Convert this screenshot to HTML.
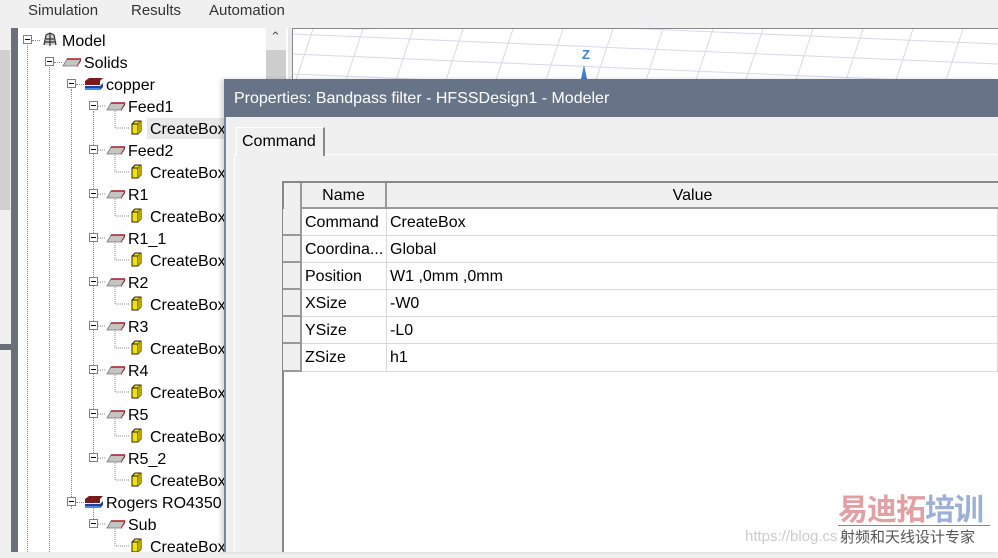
<!DOCTYPE html>
<html><head><meta charset="utf-8"><style>
*{margin:0;padding:0;box-sizing:border-box}
body{width:998px;height:552px;overflow:hidden;background:#f0f0f0;font-family:"Segoe UI","Liberation Sans","Noto Sans CJK SC",sans-serif;position:relative;font-size:16px;color:#000}
.a{position:absolute}
.menu span{position:absolute;top:2px;font-size:15px;color:#333}
.t{position:absolute;font-size:16px;white-space:nowrap;line-height:20px;margin-top:2px}
.bx{position:absolute;width:9px;height:9px;border:1px solid #808080;background:#fff}
.bx:after{content:"";position:absolute;left:1px;top:3px;width:5px;height:1px;background:#000}
.vl{position:absolute;border-left:1px dotted #888;width:0}
.hl{position:absolute;border-top:1px dotted #888;height:0}
.cell{position:absolute;border-right:1px solid #d8d8d8;border-bottom:1px solid #d8d8d8;font-size:16px;line-height:28px;padding-left:3px;white-space:nowrap;overflow:hidden;background:#fff}
.rh{position:absolute;left:283px;width:19px;background:#f0f0f0;border-right:2px solid #999;border-bottom:2px solid #999}
</style></head><body>
<div class="menu a" style="left:0;top:0;width:998px;height:28px;background:#f0f0f0">
<span style="left:28px">Simulation</span><span style="left:131px">Results</span><span style="left:209px">Automation</span></div>
<div class="a" style="left:0;top:28px;width:11px;height:524px;background:#f0f0f0"></div>
<div class="a" style="left:0;top:50px;width:10px;height:160px;background:#cfd0cf"></div>
<div class="a" style="left:0;top:344px;width:11px;height:6px;background:#6a6f7a"></div>
<div class="a" style="left:11px;top:28px;width:7px;height:524px;background:#6a6f7a"></div>
<div class="a" style="left:18px;top:28px;width:274px;height:524px;background:#fff"></div>
<div class="a" style="left:266px;top:28px;width:20px;height:524px;background:#f0f0f0"></div>
<div class="a" style="left:266px;top:50px;width:20px;height:190px;background:#cdcdcd"></div>
<div class="a" style="left:270px;top:29px;font-size:13px;color:#555">&#8963;</div>
<div class="a" style="left:288px;top:28px;width:4px;height:524px;background:#e8e8e8"></div>
<div class="a" style="left:292px;top:28px;width:706px;height:524px;background:#fff;border-left:1px solid #888;border-top:1px solid #888"></div>
<svg class="a" style="left:293px;top:29px" width="705" height="52"><g stroke="#d8d8e8" stroke-width="1" fill="none">
<path d="M0 5 L705 35 M0 25 L705 55 M0 45 L705 75 M0 -15 L705 15 M60 0 L705 -10"/>
<path d="M20 0 L0 60 M70 0 L50 60 M120 0 L100 60 M170 0 L150 60 M220 0 L200 60 M270 0 L250 60 M320 0 L300 60 M370 0 L350 60 M420 0 L400 60 M470 0 L450 60 M520 0 L500 60 M570 0 L550 60 M620 0 L600 60 M670 0 L650 60"/></g>
<text x="289" y="30" font-family="Liberation Sans" font-weight="bold" font-size="13" fill="#3b7fd8">Z</text>
<path d="M288 50 L291 36 L294 50 Z" fill="#3b7fd8"/></svg>

<div class="vl" style="left:27px;top:45px;height:507px"></div>
<div class="vl" style="left:49px;top:67px;height:485px"></div>
<div class="vl" style="left:71px;top:89px;height:420px"></div>
<div class="vl" style="left:93px;top:111px;height:350px"></div>
<div class="vl" style="left:93px;top:507px;height:20px"></div>

<div class="bx" style="left:23px;top:35px"></div><div class="hl" style="left:32px;top:40px;width:8px"></div>
<svg class="a" style="left:41px;top:31px" width="18" height="17"><path d="M3 14 L5 4 L9 2 L13 4 L15 14 M5 8 L13 8 M9 2 L9 15 M4 11 L14 11" stroke="#333" fill="#ccc" stroke-width="1.2"/></svg>
<div class="t" style="left:62px;top:30px">Model</div>
<div class="bx" style="left:45px;top:57px"></div><div class="hl" style="left:54px;top:62px;width:8px"></div>
<div class="t" style="left:84px;top:52px">Solids</div>
<div class="bx" style="left:67px;top:79px"></div><div class="hl" style="left:76px;top:84px;width:8px"></div>
<div class="t" style="left:106px;top:74px">copper</div>
<div class="bx" style="left:67px;top:497px"></div><div class="hl" style="left:76px;top:502px;width:8px"></div>
<div class="t" style="left:106px;top:492px">Rogers RO4350</div>

<svg class="a" style="left:0;top:0" width="224" height="552">
<defs>
<g id="slab"><path d="M2 10 L6 3 L20 3 L16 10 Z" fill="#c4c4c4" stroke="#777" stroke-width=".8"/><path d="M16 10 L20 3 L20 5 L16 11Z" fill="#8b1a1a"/><path d="M6 3 L20 3" stroke="#a02020" stroke-width="1.5"/></g>
<g id="cube"><path d="M1 4 L4 1 L10 1 L10 11 L7 14 L1 14 Z" fill="#f2e400" stroke="#222" stroke-width="1"/><path d="M1 4 L7 4 L10 1 M7 4 L7 14" stroke="#222" fill="none"/><path d="M7 4 L10 1 L10 11 L7 14Z" fill="#b8a800"/></g>
<g id="mat"><path d="M2 3 L6 0 L20 0 L17 3Z M2 3 L17 3 L17 7 L2 7Z" fill="#7a1a1a"/><path d="M2 8 L17 8 L20 5 L20 9 L17 12 L2 12Z" fill="#2040a0"/><path d="M2 10 L17 10 L17 12 L2 12Z" fill="#4a8ae0"/></g>
</defs>
<use href="#slab" x="61" y="56"/>
<use href="#mat" x="83" y="78"/>
<use href="#mat" x="83" y="496"/>
</svg>

<svg class="a" style="left:0;top:0" width="224" height="552">
<g stroke="#888" stroke-dasharray="1,1" fill="none">
<path d="M115 111 V128 H130 M115 155 V172 H130 M115 199 V216 H130 M115 243 V260 H130 M115 287 V304 H130 M115 331 V348 H130 M115 375 V392 H130 M115 419 V436 H130 M115 463 V480 H130 M115 529 V546 H130"/>
<path d="M98 106 H106 M98 150 H106 M98 194 H106 M98 238 H106 M98 282 H106 M98 326 H106 M98 370 H106 M98 414 H106 M98 458 H106 M98 524 H106"/>
</g>
<g fill="#fff" stroke="#808080">
<rect x="89.5" y="101.5" width="8" height="8"/><rect x="89.5" y="145.5" width="8" height="8"/><rect x="89.5" y="189.5" width="8" height="8"/><rect x="89.5" y="233.5" width="8" height="8"/><rect x="89.5" y="277.5" width="8" height="8"/><rect x="89.5" y="321.5" width="8" height="8"/><rect x="89.5" y="365.5" width="8" height="8"/><rect x="89.5" y="409.5" width="8" height="8"/><rect x="89.5" y="453.5" width="8" height="8"/><rect x="89.5" y="519.5" width="8" height="8"/>
</g>
<g stroke="#000"><path d="M91 105.5h5M91 149.5h5M91 193.5h5M91 237.5h5M91 281.5h5M91 325.5h5M91 369.5h5M91 413.5h5M91 457.5h5M91 523.5h5"/></g>
<use href="#slab" x="105" y="100"/><use href="#slab" x="105" y="144"/><use href="#slab" x="105" y="188"/><use href="#slab" x="105" y="232"/><use href="#slab" x="105" y="276"/><use href="#slab" x="105" y="320"/><use href="#slab" x="105" y="364"/><use href="#slab" x="105" y="408"/><use href="#slab" x="105" y="452"/><use href="#slab" x="105" y="518"/>
<use href="#cube" x="131" y="120"/><use href="#cube" x="131" y="164"/><use href="#cube" x="131" y="208"/><use href="#cube" x="131" y="252"/><use href="#cube" x="131" y="296"/><use href="#cube" x="131" y="340"/><use href="#cube" x="131" y="384"/><use href="#cube" x="131" y="428"/><use href="#cube" x="131" y="472"/><use href="#cube" x="131" y="538"/>
</svg>
<div class="a" style="left:147px;top:118px;width:80px;height:21px;background:#e8e8e8"></div>
<div class="t" style="left:128px;top:96px">Feed1</div><div class="t" style="left:150px;top:118px">CreateBox</div>
<div class="t" style="left:128px;top:140px">Feed2</div><div class="t" style="left:150px;top:162px">CreateBox</div>
<div class="t" style="left:128px;top:184px">R1</div><div class="t" style="left:150px;top:206px">CreateBox</div>
<div class="t" style="left:128px;top:228px">R1_1</div><div class="t" style="left:150px;top:250px">CreateBox</div>
<div class="t" style="left:128px;top:272px">R2</div><div class="t" style="left:150px;top:294px">CreateBox</div>
<div class="t" style="left:128px;top:316px">R3</div><div class="t" style="left:150px;top:338px">CreateBox</div>
<div class="t" style="left:128px;top:360px">R4</div><div class="t" style="left:150px;top:382px">CreateBox</div>
<div class="t" style="left:128px;top:404px">R5</div><div class="t" style="left:150px;top:426px">CreateBox</div>
<div class="t" style="left:128px;top:448px">R5_2</div><div class="t" style="left:150px;top:470px">CreateBox</div>
<div class="t" style="left:128px;top:514px">Sub</div><div class="t" style="left:150px;top:536px">CreateBox</div>

<div class="a" style="left:224px;top:79px;width:774px;height:473px;background:#f0f0f0;border-left:2px solid #7a8598;box-shadow:-3px 0 4px rgba(0,0,0,.15)"></div>
<div class="a" style="left:224px;top:79px;width:774px;height:38px;background:#677488;color:#fff;font-size:16px;line-height:40px;padding-left:10px">Properties: Bandpass filter - HFSSDesign1 - Modeler</div>
<div class="a" style="left:234px;top:154px;width:764px;height:398px;border-left:1px solid #fff;border-top:1px solid #fff"></div>
<div class="a" style="left:236px;top:127px;width:89px;height:29px;background:#f0f0f0;border-left:1px solid #fff;border-top:1px solid #fff;border-right:2px solid #888;font-size:16px;line-height:28px;padding-left:5px">Command</div>
<div class="a" style="left:282px;top:181px;width:716px;height:371px;background:#fff;border-left:2px solid #888;border-top:2px solid #888"></div>
<div class="a" style="left:284px;top:183px;width:714px;height:26px;background:#f0f0f0;border-bottom:2px solid #999"></div>
<div class="a" style="left:284px;top:183px;width:18px;height:26px;border-right:2px solid #999;background:#f0f0f0"></div>
<div class="a" style="left:302px;top:183px;width:85px;height:26px;border-right:2px solid #999;text-align:center;line-height:26px">Name</div>
<div class="a" style="left:387px;top:183px;width:611px;height:26px;text-align:center;line-height:26px">Value</div>

<div class="rh" style="top:209px;height:27px"></div><div class="cell" style="left:302px;top:209px;width:85px;height:27px">Command</div><div class="cell" style="left:387px;top:209px;width:611px;height:27px">CreateBox</div>
<div class="rh" style="top:236px;height:27px"></div><div class="cell" style="left:302px;top:236px;width:85px;height:27px">Coordina...</div><div class="cell" style="left:387px;top:236px;width:611px;height:27px">Global</div>
<div class="rh" style="top:263px;height:27px"></div><div class="cell" style="left:302px;top:263px;width:85px;height:27px">Position</div><div class="cell" style="left:387px;top:263px;width:611px;height:27px">W1 ,0mm ,0mm</div>
<div class="rh" style="top:290px;height:27px"></div><div class="cell" style="left:302px;top:290px;width:85px;height:27px">XSize</div><div class="cell" style="left:387px;top:290px;width:611px;height:27px">-W0</div>
<div class="rh" style="top:317px;height:27px"></div><div class="cell" style="left:302px;top:317px;width:85px;height:27px">YSize</div><div class="cell" style="left:387px;top:317px;width:611px;height:27px">-L0</div>
<div class="rh" style="top:344px;height:28px"></div><div class="cell" style="left:302px;top:344px;width:85px;height:28px">ZSize</div><div class="cell" style="left:387px;top:344px;width:611px;height:28px">h1</div>

<div class="a" style="left:745px;top:528px;font-family:'Liberation Sans',sans-serif;font-size:15px;color:#ccc">https://blog.cs</div>
<div class="a" style="left:838px;top:490px;font-family:'Noto Sans CJK SC',sans-serif;font-weight:bold;font-size:30px;line-height:34px;letter-spacing:-1px;color:#e0a0a4">易迪拓<span style="color:#9bb0d4">培训</span></div>
<div class="a" style="left:838px;top:525px;width:152px;border-top:1px solid #888"></div>
<div class="a" style="left:840px;top:527px;font-family:'Noto Sans CJK SC',sans-serif;font-size:15px;line-height:20px;color:#555">射频和天线设计专家</div>
</body></html>
